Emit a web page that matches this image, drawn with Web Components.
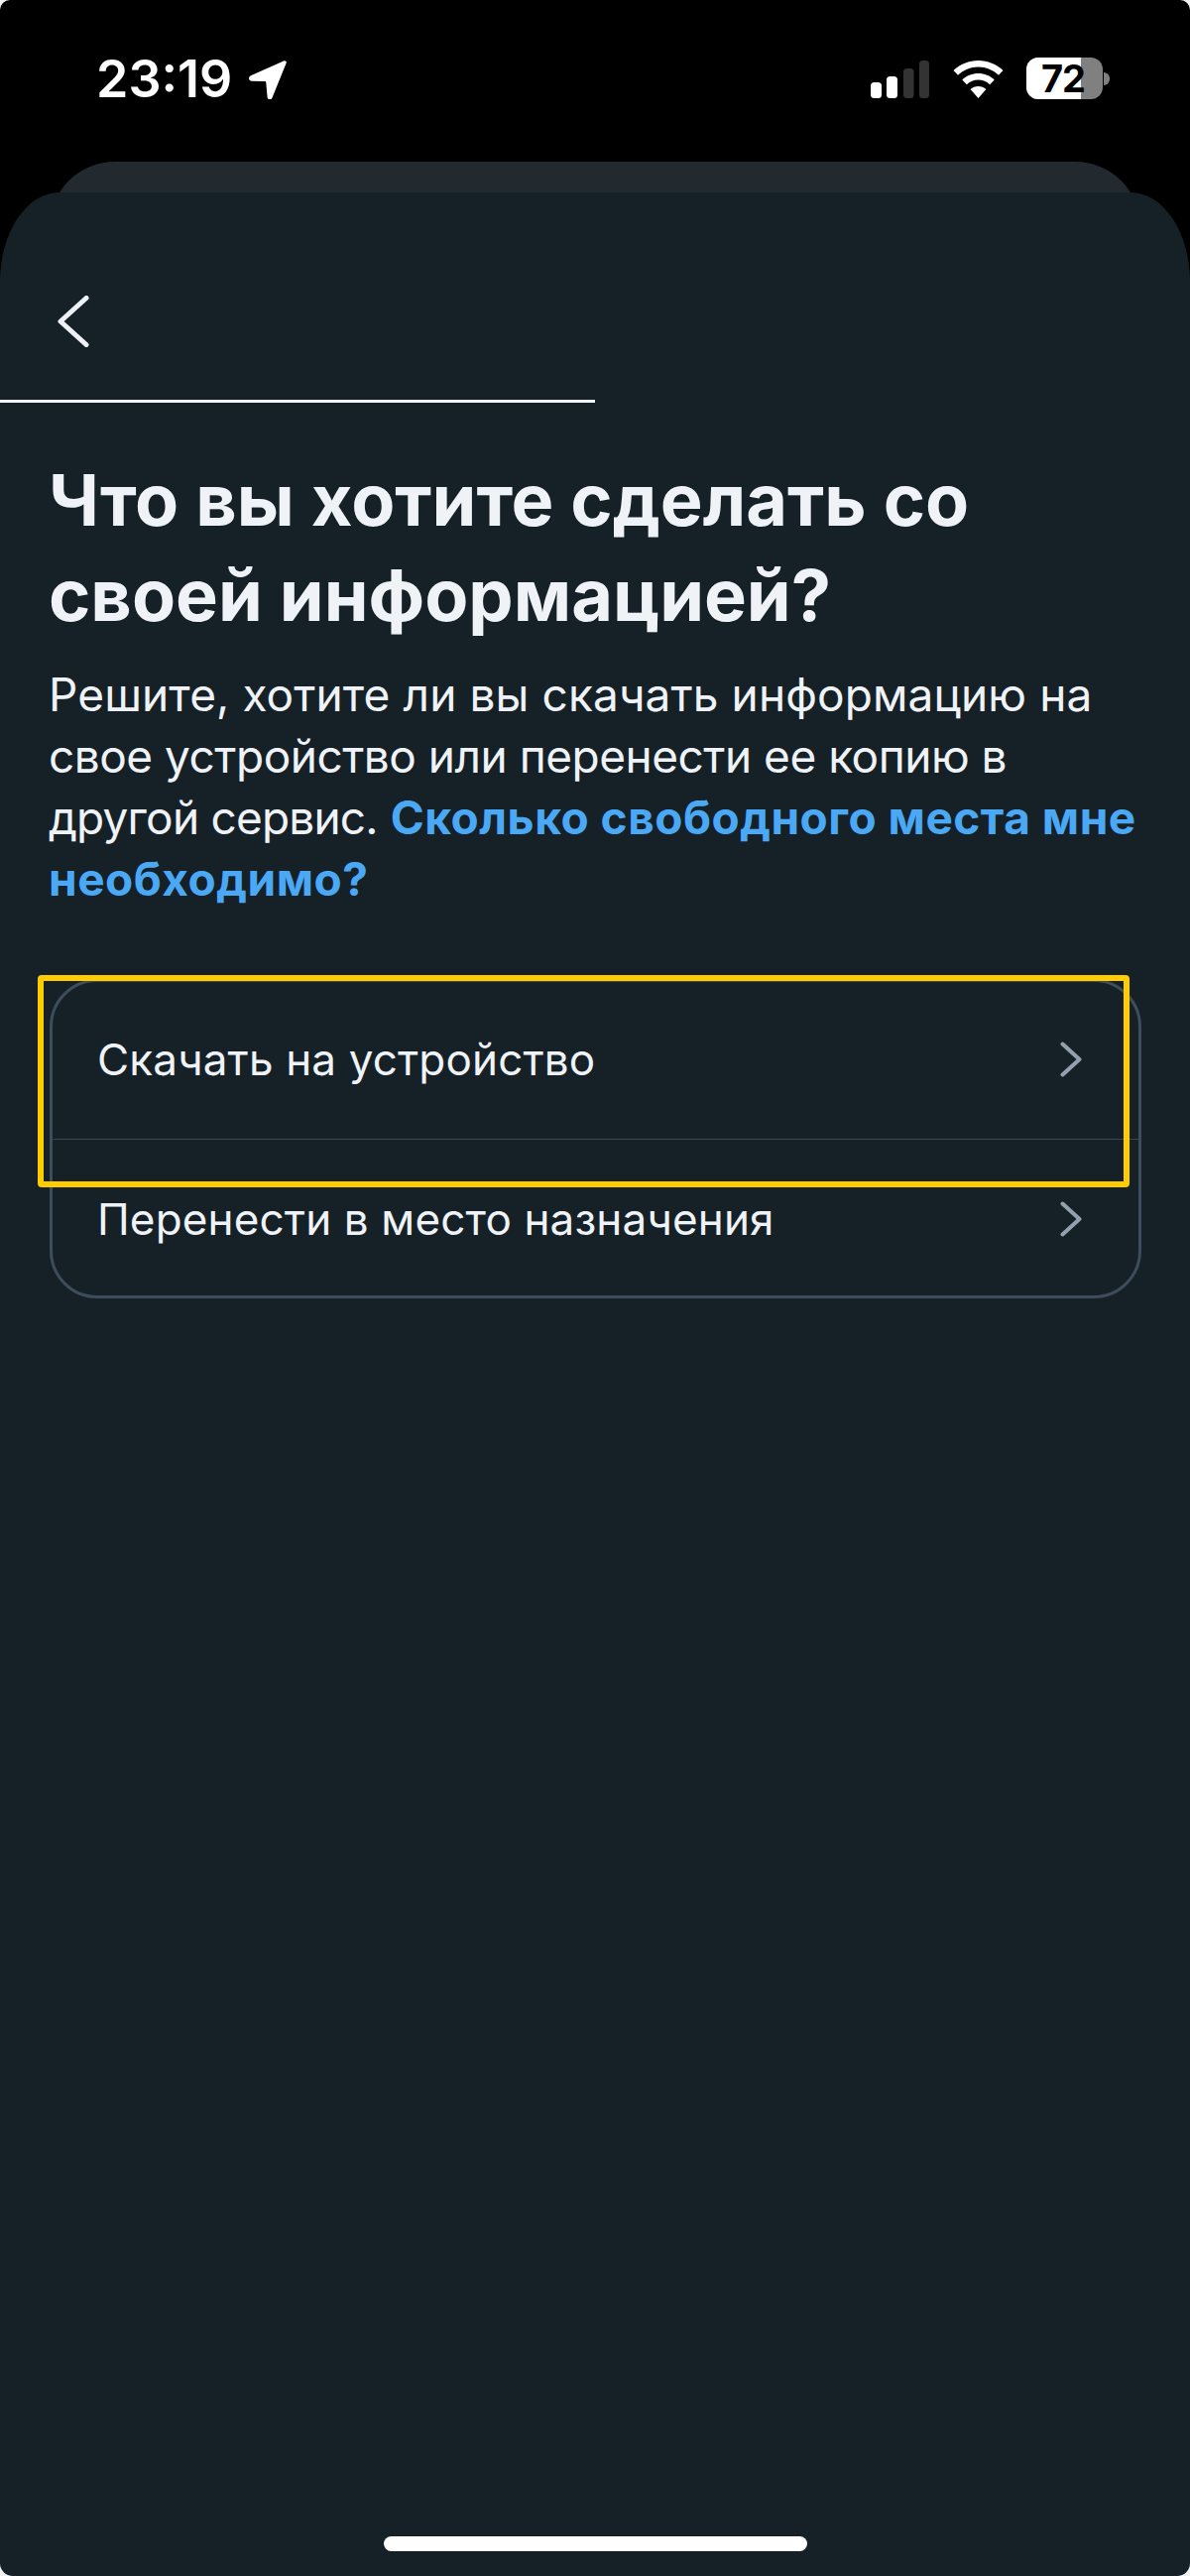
<!DOCTYPE html>
<html lang="ru"><head><meta charset="utf-8"><title>Что вы хотите сделать</title>
<style>
html,body{margin:0;padding:0;background:#000;}
body{width:1200px;height:2597px;overflow:hidden;font-family:"Inter","Liberation Sans",sans-serif;}
.l1{letter-spacing:.1px}.l2{letter-spacing:-.5px}.l3{letter-spacing:-.8px}
</style></head><body>
<app-screen>
  <status-bar slot="status" time="23:19" battery="72"></status-bar>
  <sheet-stack slot="sheet">
    <nav-header></nav-header>
    <progress-line value="50"></progress-line>
    <page-intro>
      <span slot="title">Что вы хотите сделать со своей информацией?</span>
      <span class="l1">Решите, хотите ли вы скачать информацию на</span> <span class="l2">свое устройство или перенести ее копию в</span> <span class="l3">другой сервис.</span> <a-link>Сколько свободного места мне</a-link> <a-link>необходимо?</a-link>
    </page-intro>
    <option-list>
      <option-row highlighted>Скачать на устройство</option-row>
      <option-row>Перенести в место назначения</option-row>
    </option-list>
    <home-indicator></home-indicator>
  </sheet-stack>
</app-screen>
<script>
function def(name, html, init){
  customElements.define(name, class extends HTMLElement{
    constructor(){super();this.attachShadow({mode:'open'}).innerHTML=html;}
    connectedCallback(){ if(init) init(this); }
  });
}
def('app-screen',`<style>
:host{display:flex;flex-direction:column;position:relative;width:1200px;height:2597px;background:#000;overflow:hidden}
.c{position:absolute;background:#f2f2f2}
.c::after{content:"";display:block;width:100%;height:100%}
.t{top:0;width:10px;height:10px}.b{bottom:0;width:13px;height:13px}
.t::after{background:#000}.b::after{background:#162127}
.l{left:0}.r{right:0}
.t.l::after{border-top-left-radius:10px}.t.r::after{border-top-right-radius:10px}
.b.l::after{border-bottom-left-radius:13px}.b.r::after{border-bottom-right-radius:13px}
</style><slot name="status"></slot><slot name="sheet"></slot><div class="c t l"></div><div class="c t r"></div><div class="c b l"></div><div class="c b r"></div>`);

def('status-bar',`<style>
:host{display:flex;align-items:flex-start;box-sizing:border-box;height:163px;padding:58px 81px 0 97px;color:#fff;flex:none}
.time{font:600 52px/50px "Inter","Liberation Sans",sans-serif;letter-spacing:0;margin-top:-3px}
.loc{margin:3px 0 0 16px;display:block}
.sp{flex:1}
.sig{display:block;margin:3px 0 0 0}
.wifi{display:block;margin:3px 0 0 24px}
.bat{display:flex;position:relative;margin-left:23px;width:77px;height:42px;border-radius:12px;background:#808080;flex:none}
.fill{width:55px;background:#fff;border-radius:12px 0 0 12px}
.pct{position:absolute;inset:0;display:flex;align-items:center;justify-content:center;color:#000;font:700 38px/42px "Inter","Liberation Sans",sans-serif;letter-spacing:-1px;padding-right:3px;box-sizing:border-box}
.nub{width:6px;height:13px;background:#808080;border-radius:0 7px 7px 0;margin:15px 0 0 1px}
</style>
<span class="time"></span>
<svg class="loc" width="39" height="39" viewBox="0 0 39 39"><path d="M36.600.3 3 15.200c-3.100 1.400-2.500 5.300 1 5.500l13 .3c.8 0 1.200.4 1.300 1.200l1.300 14.800c.3 2.600 3.700 3.200 4.800.8L38.700 2.500c.5-1.400-.7-2.700-2.100-2.200Z" fill="#fff"/></svg>
<span class="sp"></span>
<svg class="sig" width="59" height="38" viewBox="0 0 59 38"><rect x="0" y="22" width="11" height="16" rx="3.500" fill="#fff"/><rect x="16" y="16" width="11" height="22" rx="3.500" fill="#fff"/><rect x="33" y="8" width="10.500" height="30" rx="3.500" fill="#333"/><rect x="49" y="0" width="10" height="38" rx="3.500" fill="#333"/></svg>
<svg class="wifi" width="51" height="38" viewBox="0 0 51 38"><path d="M25.500 0C35 0 43.800 3.700 50.500 10L46 14.800C40.600 9.700 33.300 6.500 25.500 6.500S10.400 9.700 5 14.800L.5 10C7.200 3.700 16 0 25.500 0Z M25.500 13c6.200 0 11.900 2.400 16.200 6.400l-4.500 4.800c-3.100-2.800-7.200-4.600-11.700-4.600s-8.600 1.800-11.700 4.600l-4.500-4.800C13.600 15.400 19.300 13 25.500 13Z M25.500 26c3 0 5.800 1.100 7.900 3L25.500 38l-7.900-9c2.100-1.900 4.900-3 7.900-3Z" fill="#fff"/></svg>
<span class="bat"><span class="fill"></span><span class="pct"></span></span><span class="nub"></span>`,
el=>{
  el.shadowRoot.querySelector('.time').textContent=el.getAttribute('time');
  el.shadowRoot.querySelector('.pct').textContent=el.getAttribute('battery');
});

def('sheet-stack',`<style>
:host{display:flex;flex-direction:column;flex:1;min-height:0}
.back{flex:none;height:90px;margin:0 50px -59px;background:#22292f;border-radius:66px 66px 0 0}
.front{position:relative;flex:1;display:flex;flex-direction:column;background:#162127;border-radius:60px 60px 0 0 / 90px 90px 0 0}
</style><div class="back"></div><div class="front"><slot></slot></div>`);

def('nav-header',`<style>
:host{display:flex;align-items:flex-start;height:209px;box-sizing:border-box;padding:104px 0 0 58px;flex:none}
svg{display:block}
</style><svg width="32" height="52" viewBox="0 0 32 52"><path d="M29 2.500 3 26l26 23.500" fill="none" stroke="#eef2f6" stroke-width="5" stroke-linecap="round" stroke-linejoin="round"/></svg>`);

def('progress-line',`<style>
:host{display:block;height:3px;background:transparent;flex:none}
.f{height:100%;background:#f1f4f8}
</style><div class="f"></div>`,el=>{
  el.shadowRoot.querySelector('.f').style.width=el.getAttribute('value')+'%';
});

def('page-intro',`<style>
:host{display:block;padding:50px 46px 0 49px;flex:none;color:#eff3f7;font:400 46px/62px "Inter","Liberation Sans",sans-serif}
h1{margin:0 0 21px;font:700 72px/96px "Inter","Liberation Sans",sans-serif;width:1000px}
</style><h1><slot name="title"></slot></h1><div><slot></slot></div>`);

def('a-link',`<style>:host{display:inline;color:#4aa8f5;font-weight:700;letter-spacing:.5px}</style><slot></slot>`);

def('option-list',`<style>
:host{display:flex;flex-direction:column;box-sizing:border-box;flex:none;margin:70px 49px 0 50px;height:322px;border:3px solid #3e4d5b;border-radius:48px}
</style><slot></slot>`);

def('option-row',`<style>
:host{display:flex;position:relative;flex:1;align-items:flex-start;box-sizing:border-box;padding:52px 0 0 45px;color:#eff3f7;font:400 44px/56px "Inter","Liberation Sans",sans-serif;letter-spacing:.15px}
:host(:first-child){flex:none;height:159px;padding-top:50px;border-bottom:1.500px solid #3a4856}
.t{flex:1}
svg{display:block;margin:10px 57px 0 0}
.hl{display:none;position:absolute;left:-15px;top:-7px;width:1101px;height:214px;box-sizing:border-box;border:6.500px solid #ffcc00;border-radius:4px}
:host([highlighted]) .hl{display:block}
</style><span class="t"><slot></slot></span><svg width="22" height="36" viewBox="0 0 22 36"><path d="M2.500 2.500 19.500 18 2.500 33.500" fill="none" stroke="#93a1ae" stroke-width="4" stroke-linecap="round" stroke-linejoin="round"/></svg><div class="hl"></div>`);

def('home-indicator',`<style>
:host{display:block;flex:none;margin:auto 386px 25px 387px;height:15px;border-radius:8px;background:#fff}
</style>`);
</script>
</body></html>
